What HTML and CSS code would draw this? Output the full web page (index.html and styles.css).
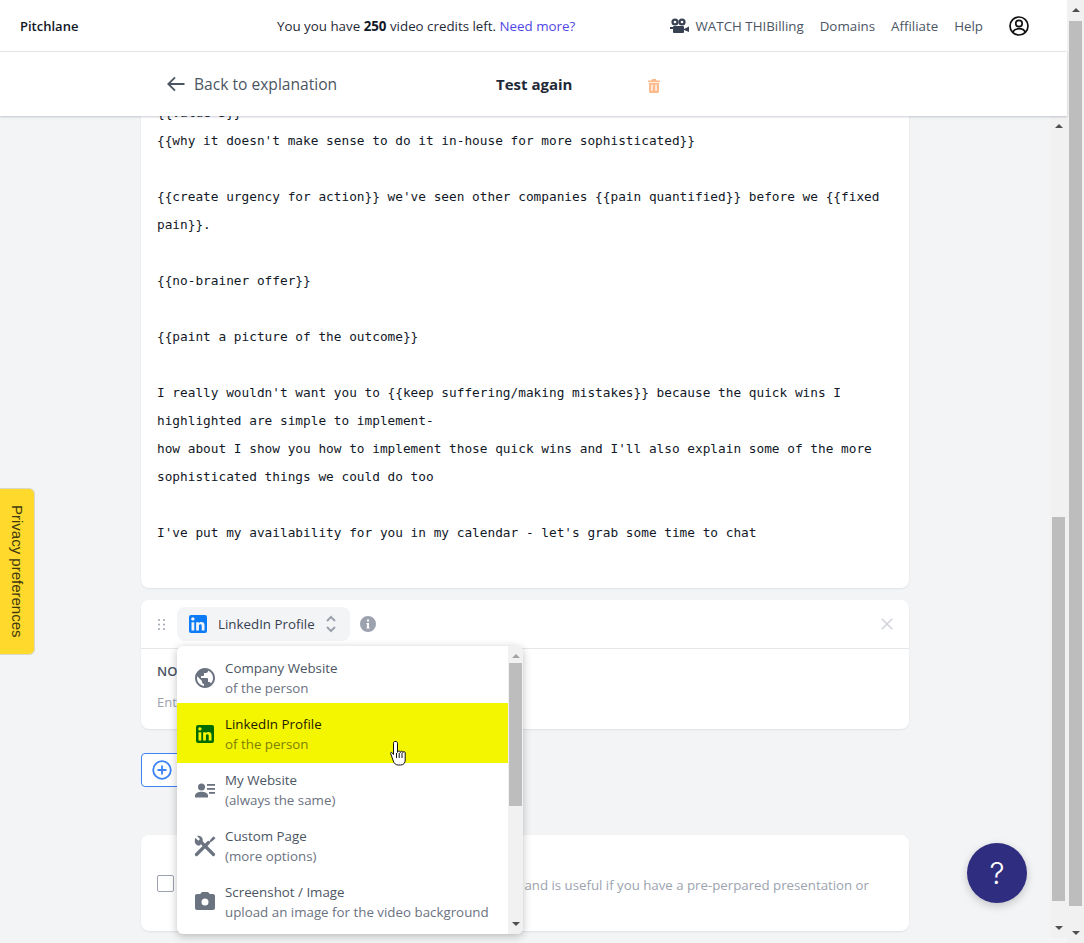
FILE: index.html
```html
<!DOCTYPE html>
<html lang="en">
<head>
<meta charset="utf-8">
<title>Pitchlane</title>
<link rel="stylesheet" href="styles.css">
</head>
<body>
<div class="page">
  <div class="app">
    <header class="topbar">
      <div class="brand">Pitchlane</div>
      <div class="credits">You you have <b>250</b> video credits left. <a class="more">Need more?</a></div>
      <nav class="nav">
        <span class="watch">
          <svg class="film" viewBox="0 0 20 16"><circle cx="5" cy="4" r="3.600" fill="#374151"/><circle cx="12" cy="4" r="3.600" fill="#374151"/><circle cx="5" cy="4" r="1.300" fill="#fff"/><circle cx="12" cy="4" r="1.300" fill="#fff"/><rect x="3" y="8" width="11" height="7" rx="1" fill="#374151"/><path d="M0 9h3v2H0zM14 11l5-2.500v5.500l-5-2z" fill="#374151"/></svg>
          <span>WATCH THI</span><span>Billing</span>
        </span>
        <span>Domains</span>
        <span>Affiliate</span>
        <span>Help</span>
        <svg class="user" viewBox="0 0 20 20" fill="none" stroke="#111" stroke-width="1.700"><circle cx="10" cy="10" r="9"/><circle cx="10" cy="7.500" r="3.200"/><path d="M3.800 16.300c1-2.700 3.400-3.600 6.200-3.600s5.200.9 6.200 3.600"/></svg>
      </nav>
    </header>
    <div class="subbar">
      <svg class="back-arrow" viewBox="0 0 18 16" fill="none" stroke="#4b5563" stroke-width="1.800"><path d="M17.500 8H1.500M8 1.300 1.300 8 8 14.700"/></svg>
      <span class="back">Back to explanation</span>
      <span class="title">Test again</span>
      <svg class="trash" viewBox="0 0 12 14"><path fill="#fdba8c" fill-rule="evenodd" d="M4 0h4l.6 1.400H12v1.800H0V1.400h3.400zM1 4h10v8.500c0 .8-.7 1.500-1.500 1.500h-7C1.700 14 1 13.300 1 12.500zm2.300 1.800v6h1.300v-6zm4.100 0v6h1.300v-6z"/></svg>
    </div>
    <div class="workspace">
      <main class="content">
        <section class="card script-card">
<pre class="script">{{value 3}}
{{why it doesn't make sense to do it in-house for more sophisticated}}

{{create urgency for action}} we've seen other companies {{pain quantified}} before we {{fixed
pain}}.

{{no-brainer offer}}

{{paint a picture of the outcome}}

I really wouldn't want you to {{keep suffering/making mistakes}} because the quick wins I
highlighted are simple to implement-
how about I show you how to implement those quick wins and I'll also explain some of the more
sophisticated things we could do too

I've put my availability for you in my calendar - let's grab some time to chat</pre>
        </section>

        <section class="card source-card">
          <div class="source-head">
            <svg class="dots" viewBox="0 0 7 11" fill="#9ca3af"><circle cx="1" cy="1" r="1"/><circle cx="6" cy="1" r="1"/><circle cx="1" cy="5.500" r="1"/><circle cx="6" cy="5.500" r="1"/><circle cx="1" cy="10" r="1"/><circle cx="6" cy="10" r="1"/></svg>
            <div class="select">
              <svg class="li-icon" viewBox="3 3 18 18"><path fill="#0b7bf7" d="M19 3a2 2 0 0 1 2 2v14a2 2 0 0 1-2 2H5a2 2 0 0 1-2-2V5a2 2 0 0 1 2-2h14m-.5 15.500v-5.300a3.260 3.260 0 0 0-3.260-3.260c-.85 0-1.840.52-2.320 1.300v-1.110h-2.790v8.370h2.790v-4.930c0-.77.62-1.400 1.390-1.400a1.400 1.400 0 0 1 1.400 1.400v4.930h2.790M6.880 8.560a1.680 1.680 0 0 0 1.680-1.680c0-.93-.75-1.690-1.680-1.690a1.690 1.690 0 0 0-1.690 1.690c0 .93.76 1.680 1.690 1.680m1.390 9.940v-8.370H5.500v8.370h2.770z"/></svg>
              <span class="select-label">LinkedIn Profile</span>
              <svg class="chev" viewBox="0 0 10 18" fill="none" stroke="#9ca3af" stroke-width="2"><path d="M1 6l4-4 4 4M1 12l4 4 4-4"/></svg>
            </div>
            <svg class="info" viewBox="0 0 16 16"><path fill="#9ca3af" fill-rule="evenodd" d="M8 0a8 8 0 1 1 0 16A8 8 0 0 1 8 0zM7 3.500v2h2v-2zM6.500 7v1.300H7v3H6.500v1.300h3v-1.300H9V7z"/></svg>
            <svg class="close" viewBox="0 0 12 12" fill="none" stroke="#d1d5db" stroke-width="1.600"><path d="M.7.7l10.600 10.600M11.300.7.700 11.300"/></svg>
          </div>
          <div class="source-body">
            <div class="note-label">NO</div>
            <div class="note-input">Ent</div>
          </div>

          <div class="dropdown">
            <ul class="options">
              <li class="option first">
                <svg class="opt-icon" viewBox="0 0 24 24"><path fill="#6b7280" d="M12 2C6.480 2 2 6.480 2 12s4.480 10 10 10 10-4.480 10-10S17.520 2 12 2zm-1 17.930c-3.950-.49-7-3.850-7-7.930 0-.62.08-1.210.21-1.790L9 15v1c0 1.100.9 2 2 2v1.930zm6.900-2.540c-.26-.81-1-1.390-1.900-1.390h-1v-3c0-.55-.45-1-1-1H8v-2h2c.55 0 1-.45 1-1V7h2c1.100 0 2-.9 2-2v-.41c2.930 1.190 5 4.060 5 7.410 0 2.080-.8 3.970-2.100 5.390z"/></svg>
                <div class="opt-text"><div class="opt-title">Company Website</div><div class="opt-sub">of the person</div></div>
              </li>
              <li class="option active">
                <svg class="opt-icon li-small" viewBox="3 3 18 18"><path fill="#006b00" d="M19 3a2 2 0 0 1 2 2v14a2 2 0 0 1-2 2H5a2 2 0 0 1-2-2V5a2 2 0 0 1 2-2h14m-.5 15.500v-5.300a3.260 3.260 0 0 0-3.260-3.260c-.85 0-1.840.52-2.320 1.300v-1.110h-2.790v8.370h2.790v-4.930c0-.77.62-1.400 1.390-1.400a1.400 1.400 0 0 1 1.400 1.400v4.930h2.790M6.880 8.560a1.680 1.680 0 0 0 1.680-1.680c0-.93-.75-1.690-1.680-1.690a1.690 1.690 0 0 0-1.690 1.690c0 .93.76 1.680 1.690 1.680m1.390 9.940v-8.370H5.500v8.370h2.770z"/></svg>
                <div class="opt-text"><div class="opt-title">LinkedIn Profile</div><div class="opt-sub">of the person</div></div>
              </li>
              <li class="option">
                <svg class="opt-icon" viewBox="0 0 24 24" fill="#6b7280"><circle cx="8.500" cy="9" r="3.500"/><path d="M2 19.500v-2c0-2.500 3.500-3.800 6.500-3.800s6.500 1.300 6.500 3.800v2z"/><rect x="14" y="6" width="8" height="1.800"/><rect x="14" y="10" width="8" height="1.800"/><rect x="16" y="14" width="6" height="1.800"/></svg>
                <div class="opt-text"><div class="opt-title">My Website</div><div class="opt-sub">(always the same)</div></div>
              </li>
              <li class="option">
                <svg class="opt-icon" viewBox="0 0 24 24" fill="none" stroke="#6b7280"><path stroke-width="3.200" stroke-linecap="round" d="M8 8l12.500 12.500"/><path stroke-width="3.200" stroke-linecap="round" d="M3.500 20.500 15.500 8.500"/><path fill="#6b7280" stroke="none" d="M2.300 3.800l3 3 1.700-1.700-3-3c2.500-.9 5.200.6 5.700 3.200.2.900.1 1.700-.2 2.500L6.900 11.400c-2.900.6-5.500-1.800-5.100-4.700.1-1 .2-2 .5-2.900zM17.500 5.500l3-3.300 2 2-3.300 3-1.700 1-1-1z"/></svg>
                <div class="opt-text"><div class="opt-title">Custom Page</div><div class="opt-sub">(more options)</div></div>
              </li>
              <li class="option">
                <svg class="opt-icon" viewBox="0 0 24 24"><path fill="#6b7280" fill-rule="evenodd" d="M9 2L7.170 4H4c-1.100 0-2 .9-2 2v12c0 1.100.9 2 2 2h16c1.100 0 2-.9 2-2V6c0-1.100-.9-2-2-2h-3.170L15 2H9zm3 6.500a3.500 3.500 0 1 1 0 7 3.500 3.500 0 0 1 0-7z"/></svg>
                <div class="opt-text"><div class="opt-title">Screenshot / Image</div><div class="opt-sub">upload an image for the video background</div></div>
              </li>
            </ul>
            <div class="sb sb-drop">
              <i class="arrow up muted"></i>
              <div class="thumb thumb-drop"></div>
              <i class="arrow down"></i>
            </div>
            <svg class="hand" viewBox="0 0 16 26"><path fill="#fff" stroke="#111" stroke-width="1" stroke-linejoin="round" d="M5 1.500c-1 0-1.500.7-1.500 1.700v11.300L2.200 12.800c-.8-.8-1.900-.6-1.500.8l2.600 7.400c.8 2.300 2.300 4 5 4h2.400c3 0 4.500-2.200 4.500-5v-7c0-1.800-2.300-1.900-2.300-.3 0-2-2.600-2-2.600-.1 0-2-2.800-2-2.800-.2V3.200c0-1-.6-1.700-1.500-1.700z"/><path stroke="#111" fill="none" d="M6.500 13v5M9.200 13v5M12 13v5"/></svg>
          </div>
        </section>

        <button class="add-btn" type="button">
          <svg class="add-icon" viewBox="0 0 20 20" fill="none" stroke="#3b82f6" stroke-width="1.800"><circle cx="10" cy="10" r="8.800"/><path d="M10 5.500v9M5.500 10h9"/></svg>
        </button>

        <section class="card option-card">
          <span class="checkbox"></span>
          <p class="option-copy">and is useful if you have a pre-perpared presentation or</p>
        </section>
      </main>
      <div class="sb sb-inner">
        <i class="arrow up"></i>
        <div class="thumb thumb-inner"></div>
        <i class="arrow down"></i>
      </div>
    </div>
  </div>
  <div class="sb sb-outer">
    <i class="arrow up"></i>
    <div class="thumb thumb-outer"></div>
    <i class="arrow down"></i>
  </div>
</div>
<div class="privacy"><span>Privacy preferences</span></div>
<div class="help">?</div>
</body>
</html>
```
FILE: styles.css
```css
* { box-sizing: border-box; }
html, body { margin: 0; height: 943px; overflow: hidden; }
body { font-family: "Open Sans", "Noto Sans", sans-serif; color: #374151; background: #f3f4f6; position: relative; }

.page { display: flex; height: 943px; }
.app { width: 1067px; display: flex; flex-direction: column; }

.topbar { height: 52px; flex: none; background: #fff; border-bottom: 1px solid #e5e7eb; display: flex; align-items: center; padding: 0 38px 0 20px; font-size: 13.33px; }
.brand { width: 257px; font-size: 13px; font-weight: 600; color: #111827; }
.credits { color: #1f2937; white-space: nowrap; }
.credits b { font-weight: 700; color: #111827; }
.more { color: #4f46e5; }
.nav { margin-left: auto; display: flex; align-items: center; gap: 16px; color: #4b5563; white-space: nowrap; }
.watch { display: flex; align-items: center; }
.film { width: 20px; height: 16px; margin-right: 6px; }
.user { width: 20px; height: 20px; margin-left: 10px; }

.subbar { height: 64px; flex: none; background: #fff; display: flex; align-items: center; padding-left: 167px; box-shadow: 0 1px 2px rgba(75, 85, 120, .3); position: relative; z-index: 2; }
.back-arrow { width: 18px; height: 16px; margin-right: 9px; }
.back { width: 302px; font-size: 15.6px; color: #4b5563; font-weight: 500; white-space: nowrap; }
.title { width: 152px; font-size: 15px; font-weight: 700; color: #1f2937; }
.trash { width: 12px; height: 14px; margin-top: 3px; }

.workspace { flex: 1; display: flex; min-height: 0; }
.content { flex: 1; padding-left: 141px; overflow: hidden; }

.card { width: 768px; background: #fff; border-radius: 8px; box-shadow: 0 1px 2px rgba(0, 0, 0, .08); }
.script-card { height: 472px; padding-left: 16px; border-radius: 0 0 8px 8px; overflow: hidden; }
.script { margin: -17px 0 0; font-family: "DejaVu Sans Mono", "Liberation Mono", monospace; font-size: 12.78px; line-height: 28px; color: #111827; white-space: pre; }

.source-card { position: relative; height: 129px; margin-top: 12px; }
.source-head { height: 49px; border-bottom: 1px solid #e5e7eb; display: flex; align-items: center; padding-left: 17px; }
.dots { width: 7px; height: 11px; margin-right: 12px; }
.select { width: 173px; height: 34px; margin-top: -1px; background: #f3f4f6; border-radius: 8px; display: flex; align-items: center; padding-left: 12px; }
.li-icon { width: 18px; height: 18px; margin-right: 11px; }
.select-label { width: 108px; font-size: 13.33px; font-weight: 500; color: #374151; white-space: nowrap; }
.chev { width: 10px; height: 18px; }
.info { width: 16px; height: 16px; margin-left: 10px; }
.close { width: 12px; height: 12px; margin-left: auto; margin-right: 16px; }
.source-body { padding: 13px 16px; }
.note-label { font-size: 13px; font-weight: 600; color: #4b5563; }
.note-input { margin-top: 13px; font-size: 13px; color: #9ca3af; }

.dropdown { position: absolute; left: 36px; top: 46px; width: 346px; height: 288px; background: #fff; border-radius: 6px; box-shadow: 0 2px 8px rgba(0, 0, 0, .25); display: flex; overflow: hidden; z-index: 3; }
.options { list-style: none; margin: 0; padding: 1px 0 0; width: 331px; flex: none; }
.option { height: 56px; padding: 7px 0 0 18px; display: flex; align-items: flex-start; }
.option.first { padding-top: 11px; }
.option.first .opt-icon { margin-top: 8px; }
.option.active { height: 60px; padding-top: 11px; background: #f4f600; }
.option.active .opt-title { color: #1f2000; font-weight: 500; }
.option.active .opt-sub { color: #7d7f00; }
.opt-icon { width: 24px; height: 24px; margin: 8px 8px 0 -2px; flex: none; }
.li-small { width: 18px; height: 18px; margin: 11px 11px 0 1px; }
.opt-title { font-size: 13.33px; line-height: 20px; color: #4b5563; white-space: nowrap; }
.opt-sub { font-size: 13.33px; line-height: 20px; color: #6b7280; white-space: nowrap; }
.hand { position: absolute; left: 213px; top: 94px; width: 16px; height: 26px; }

.add-btn { display: block; width: 60px; height: 34px; margin-top: 24px; padding: 0 0 0 10px; background: #fff; border: 1px solid #3b82f6; border-radius: 4px; text-align: left; }
.add-icon { display: block; width: 20px; height: 20px; }

.option-card { height: 96px; margin-top: 48px; display: flex; align-items: center; padding: 0 40px 0 16px; justify-content: space-between; }
.checkbox { width: 17px; height: 17px; border: 1px solid #9ca3af; border-radius: 2px; background: #fff; }
.option-copy { margin: 4px 0 0; font-size: 13.25px; color: #9ca3af; white-space: nowrap; }

.sb { width: 17px; flex: none; background: #f1f1f1; display: flex; flex-direction: column; align-items: center; position: relative; }
.sb-outer { height: 943px; }
.sb-inner { height: 822px; }
.sb-drop { width: 15px; height: 288px; }
.thumb { width: 13px; background: #bdbdbd; }
.thumb-outer { height: 885px; margin-top: 8px; }
.thumb-inner { height: 384px; margin-top: 388px; }
.thumb-drop { height: 143px; margin-top: 4px; }
.arrow { display: block; width: 0; height: 0; border-left: 4px solid transparent; border-right: 4px solid transparent; }
.arrow.up { border-bottom: 4px solid #505050; margin-top: 8px; margin-bottom: 1px; }
.arrow.down { border-top: 4px solid #505050; margin-top: auto; margin-bottom: 8px; }
.arrow.muted { border-bottom-color: #a3a3a3; }

.privacy { position: absolute; left: 0; top: 488px; width: 35px; height: 167px; background: #ffd92b; border: 1px solid #d9d9c8; border-left: none; border-radius: 0 6px 6px 0; display: flex; align-items: center; justify-content: center; }
.privacy span { writing-mode: vertical-rl; font-family: "Liberation Sans", Arial, sans-serif; font-size: 15px; font-weight: 500; color: #3f3a10; white-space: nowrap; }

.help { position: absolute; left: 967px; top: 843px; width: 60px; height: 60px; border-radius: 50%; background: #2f2d80; color: #fff; font-family: "Inter", sans-serif; font-size: 30px; font-weight: 300; display: flex; align-items: center; justify-content: center; box-shadow: 0 3px 8px rgba(0, 0, 0, .2); }
```
